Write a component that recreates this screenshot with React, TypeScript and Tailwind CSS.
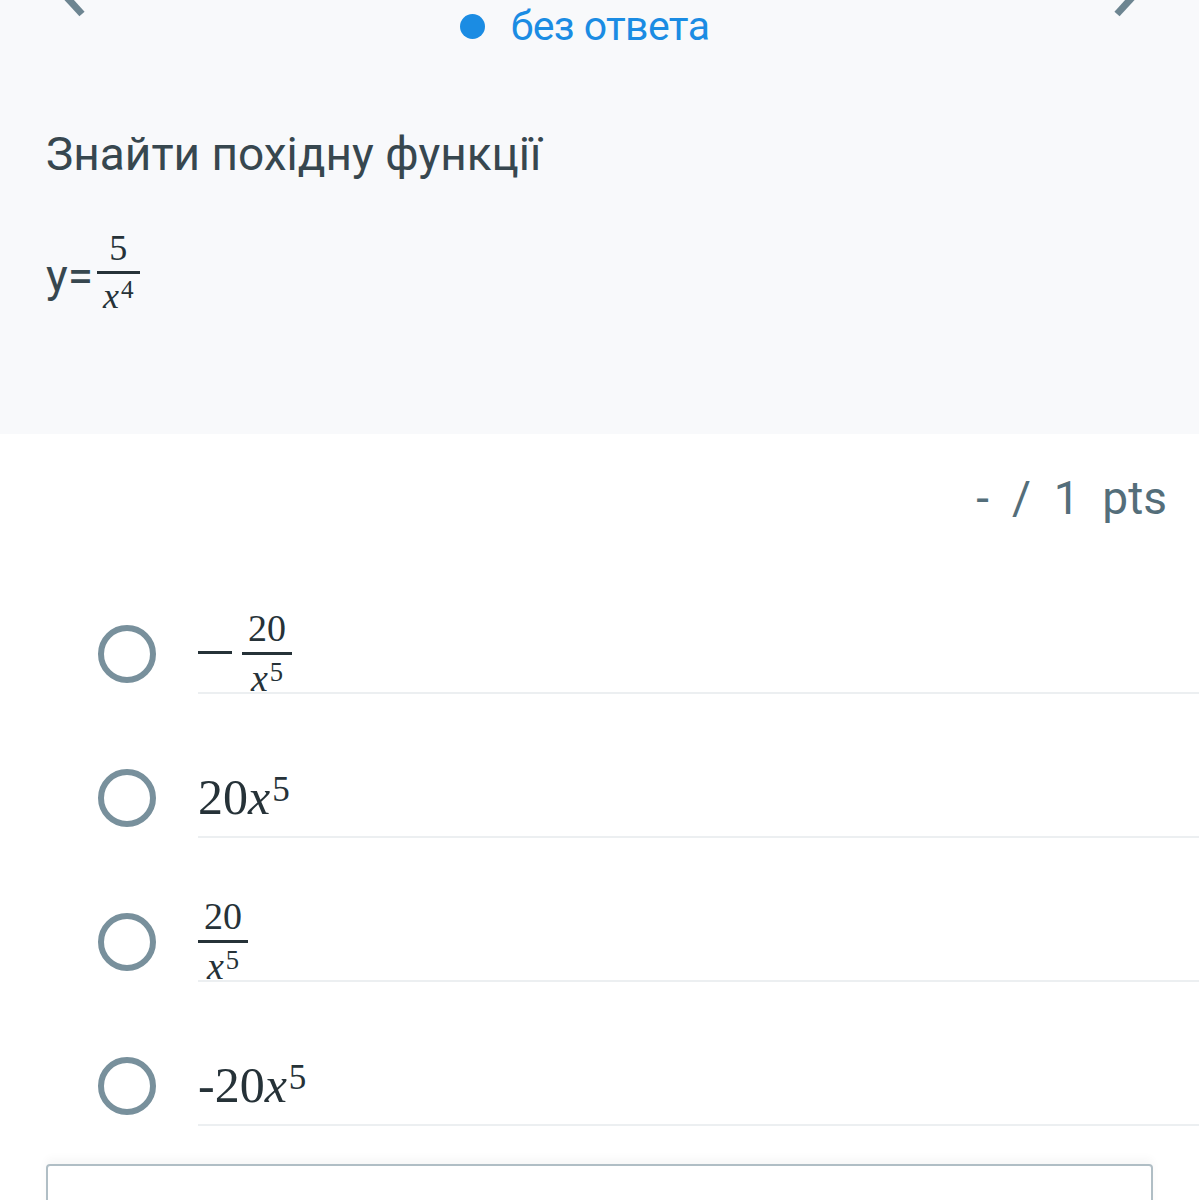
import React from 'react';

const mathFont = { fontFamily: '"Liberation Serif", "DejaVu Serif", serif' };

const Frac = ({ num, den, size = 'text-[38px]' }: { num: React.ReactNode; den: React.ReactNode; size?: string }) => (
  <span className={`inline-flex flex-col items-center align-middle ${size} leading-none`}>
    <span className="px-[6px] pb-[5px]">{num}</span>
    <span className="w-full border-t-[3px] border-[#263238]" />
    <span className="px-[6px] pt-[4px]">{den}</span>
  </span>
);

const XPow = ({ p }: { p: string }) => (
  <span>
    <i>x</i>
    <sup className="text-[0.7em] relative -top-[0.38em] ml-[2px]">{p}</sup>
  </span>
);

const options: React.ReactNode[] = [
  <span className="flex items-center gap-[10px]">
    <span className="w-[34px] border-t-[3px] border-[#263238] -mt-[2px]" />
    <Frac num="20" den={<XPow p="5" />} />
  </span>,
  <span className="text-[50px] leading-none">
    20<XPow p="5" />
  </span>,
  <Frac num="20" den={<XPow p="5" />} />,
  <span className="text-[50px] leading-none">
    -20<XPow p="5" />
  </span>,
];

export default function App() {
  return (
    <div className="w-[1199px] h-[1200px] overflow-hidden bg-white text-[#37474f]" style={{ fontFamily: 'Roboto, "Noto Sans", sans-serif' }}>
      <div className="relative bg-[#f8f9fb] h-[434px] px-[46px]">
        <svg className="absolute left-[56px] -top-[14px]" width="34" height="32" viewBox="0 0 34 32">
          <path d="M4 4 L26 28" stroke="#6d8591" strokeWidth="7" strokeLinecap="butt" fill="none" />
        </svg>
        <svg className="absolute right-[56px] -top-[14px]" width="34" height="32" viewBox="0 0 34 32">
          <path d="M30 4 L8 28" stroke="#6d8591" strokeWidth="7" strokeLinecap="butt" fill="none" />
        </svg>
        <div className="flex items-center justify-center gap-[26px] pt-[2px] pr-[30px]">
          <span className="w-[25px] h-[25px] rounded-full bg-[#1b8ce3]" />
          <span className="text-[41px] leading-[48px] text-[#1b8ce3] tracking-[-0.6px]">без ответа</span>
        </div>
        <div className="pt-[74px] text-[46px] leading-[60px]">Знайти похідну функції</div>
        <div className="flex items-center pt-[46px]">
          <span className="text-[46px] leading-none pt-[8px]">y=</span>
          <span style={mathFont} className="ml-[4px] text-[#263238]">
            <Frac num="5" den={<XPow p="4" />} size="text-[36px]" />
          </span>
        </div>
      </div>

      <div className="flex justify-end pr-[32px] pt-[34px] text-[46px] leading-[60px] text-[#546e7a]">
        <span className="whitespace-pre">-  /  1  pts</span>
      </div>

      <div className="pt-[54px]">
        {options.map((opt, i) => (
          <div key={i} className="flex items-center h-[144px] pl-[98px]">
            <span className="w-[58px] h-[58px] shrink-0 rounded-full border-[6px] border-[#78909c]" />
            <div className="flex-1 ml-[42px] h-[80px] self-center flex items-center border-b-2 border-[#eceff1]">
              <span style={mathFont} className="text-[#263238]">{opt}</span>
            </div>
          </div>
        ))}
      </div>

      <div className="mx-[46px] mt-[6px] h-[60px] rounded-[4px] border-2 border-[#b0bec5] shadow-[0_-6px_8px_rgba(0,0,0,0.03)]" />
    </div>
  );
}
